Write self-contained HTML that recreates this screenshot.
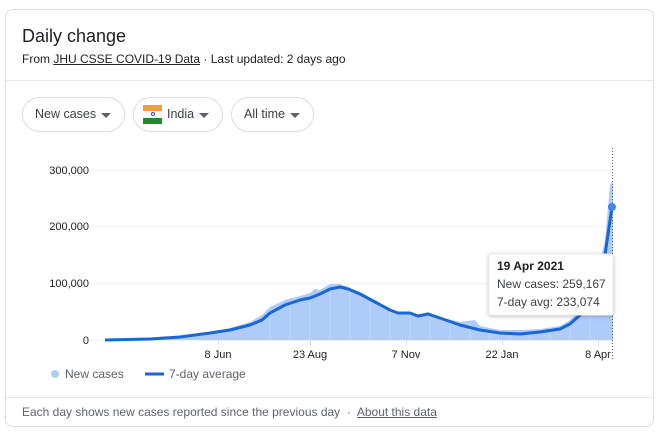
<!DOCTYPE html>
<html><head><style>
body{margin:0;width:662px;height:433px;background:#fff;font-family:"Liberation Sans",Arial,sans-serif;position:relative;overflow:hidden}
.card{position:absolute;left:5px;top:9px;width:649px;height:418px;border:1px solid #dadce0;border-radius:8px;box-sizing:border-box}
.t{position:absolute;left:22px;top:26px;font-size:18px;color:#202124}
.s{position:absolute;left:22px;top:52px;font-size:12px;color:#202124}
.s u{color:#202124}
.hr{position:absolute;left:6px;width:647px;height:1px;background:#e8eaed}
.chip{position:absolute;top:97px;height:35px;border:1px solid #dadce0;border-radius:18px;box-sizing:border-box;font-size:12.5px;color:#3c4043;line-height:33px;padding-left:12px}
.chip:after{content:"";position:absolute;right:13px;top:15px;border:5px solid transparent;border-top:5px solid #5f6368;border-bottom:0}
.f{position:absolute;left:22px;top:405px;font-size:12px;color:#5f6368}
</style></head><body>
<div class="card"></div>
<div class="t">Daily change</div>
<div class="s">From <u>JHU CSSE COVID-19 Data</u> · Last updated: 2 days ago</div>
<div class="hr" style="top:80px"></div>
<div class="chip" style="left:22px;width:103px">New cases</div>
<div class="chip" style="left:133px;width:90px;padding-left:33px">India
<div style="position:absolute;left:9px;top:7px;width:19px;height:18px">
<div style="height:6px;background:#f59b3a"></div><div style="height:6px;background:#fff;text-align:center"><div style="margin:1px auto;width:4px;height:4px;border:1px solid #3a4ba8;border-radius:50%;box-sizing:border-box"></div></div><div style="height:6px;background:#1d8b2b"></div></div></div>
<div class="chip" style="left:231px;width:83px">All time</div>
<svg style="position:absolute;left:0;top:0" width="662" height="433">
<g stroke="#f1f3f4" stroke-width="1">
<line x1="90" y1="170.5" x2="612" y2="170.5"/><line x1="90" y1="226.5" x2="612" y2="226.5"/><line x1="90" y1="283.5" x2="612" y2="283.5"/><line x1="90" y1="340.5" x2="612" y2="340.5"/>
</g>
<g font-size="11" fill="#202124" text-anchor="end"><text x="89" y="174">300,000</text><text x="89" y="230">200,000</text><text x="89" y="287">100,000</text><text x="89" y="344">0</text></g>
<polygon fill="#aecbfa" points="105,340 150,339 180,336 210,332 230,328 250,322 262,315 270,307 285,300 300,296 310,293 315,289 320,290 330,284 340,284 348,287 360,292 375,300 390,309 398,312 410,313 418,315 428,312 440,317 460,322 475,320 480,326 500,330 520,330 540,329 560,326 570,320 580,310 590,290 600,262 605,240 610,185 613,180 613,340"/>
<g stroke="#fff" stroke-width="0.6" opacity="0.3"><path d="M270 300V340M290 300V340M310 296V340M330 290V340M350 288V340M370 296V340M390 310V340M410 313V340M430 314V340M450 320V340M470 323V340M490 330V340M510 332V340M530 332V340M550 330V340M570 322V340M590 300V340"/></g>
<line x1="612.5" y1="148" x2="612.5" y2="360" stroke="#5f6368" stroke-dasharray="1,2"/>
<polyline fill="none" stroke="#1967d2" stroke-width="3" stroke-linejoin="round" points="105,340 150,339 180,337 210,333 230,330 250,325 262,320 270,313 285,305 300,300 310,298 320,294 330,289 340,287 348,289 360,294 375,302 390,310 398,313 410,313 418,316 428,314 440,318 460,325 480,330 500,333 520,334 540,332 560,329 570,324 580,315 590,300 600,275 605,255 612,207"/>
<circle cx="612" cy="207" r="4" fill="#4285f4"/>
<g stroke="#dadce0"><line x1="218.5" y1="340" x2="218.5" y2="345"/><line x1="310.5" y1="340" x2="310.5" y2="345"/><line x1="406.5" y1="340" x2="406.5" y2="345"/><line x1="502.5" y1="340" x2="502.5" y2="345"/><line x1="598.5" y1="340" x2="598.5" y2="345"/></g>
<g font-size="11" fill="#202124" text-anchor="middle"><text x="218" y="358">8 Jun</text><text x="310" y="358">23 Aug</text><text x="406" y="358">7 Nov</text><text x="502" y="358">22 Jan</text><text x="598" y="358">8 Apr</text></g>
<circle cx="55" cy="374" r="4" fill="#aecbfa"/>
<text x="65" y="378" font-size="12" fill="#5f6368">New cases</text>
<line x1="145" y1="374" x2="164" y2="374" stroke="#1967d2" stroke-width="3"/>
<text x="169" y="378" font-size="12" fill="#5f6368">7-day average</text>
<rect x="489" y="254" width="124" height="61" rx="2" fill="#fff" stroke="#eee" style="filter:drop-shadow(0 1px 2px rgba(0,0,0,.25))"/>
<text x="497" y="270" font-size="12" font-weight="bold" fill="#202124">19 Apr 2021</text>
<text x="497" y="288" font-size="12" fill="#3c4043">New cases: 259,167</text>
<text x="497" y="306" font-size="12" fill="#3c4043">7-day avg: 233,074</text>
</svg>
<div class="hr" style="top:397px"></div>
<div class="f">Each day shows new cases reported since the previous day &nbsp;·&nbsp; <u>About this data</u></div>
</body></html>
